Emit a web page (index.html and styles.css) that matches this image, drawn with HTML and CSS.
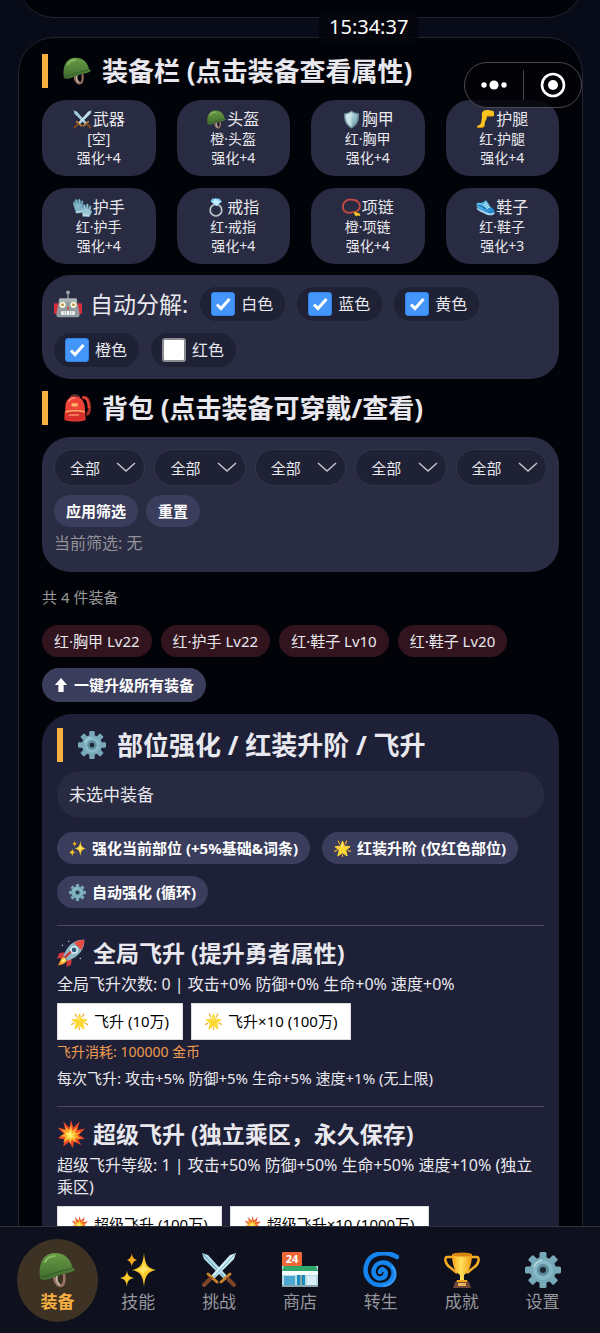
FILE: index.html
```
<!DOCTYPE html>
<html lang="zh-CN">
<head>
<meta charset="utf-8">
<meta name="viewport" content="width=device-width, initial-scale=1">
<title>装备</title>
<link rel="stylesheet" href="styles.css">
</head>
<body>
<svg class="sprite" aria-hidden="true">
  <defs>
    <linearGradient id="g-helmet" x1="0" y1="0" x2="0" y2="1"><stop offset="0" stop-color="#689b45"/><stop offset="1" stop-color="#3f6b2e"/></linearGradient>
    <linearGradient id="g-gold" x1="0" y1="0" x2="1" y2="0"><stop offset="0" stop-color="#f9a51b"/><stop offset=".45" stop-color="#ffe05a"/><stop offset="1" stop-color="#f19b12"/></linearGradient>
    <linearGradient id="g-shield" x1="0" y1="0" x2="1" y2="1"><stop offset="0" stop-color="#d4eef2"/><stop offset="1" stop-color="#6b9cab"/></linearGradient>
    <linearGradient id="g-shoe" x1="0" y1="0" x2="1" y2="1"><stop offset="0" stop-color="#6fd0f5"/><stop offset="1" stop-color="#1476c4"/></linearGradient>
  </defs>
  <symbol id="helmet" viewBox="0 0 36 36">
    <path d="M15 23c0 5 2 10 6 11 4 0 5-5 4-12" fill="none" stroke="#9c7565" stroke-width="2.600"/>
    <path d="M18 23c-1 4 0 8 3 10" fill="none" stroke="#c5b5a8" stroke-width="2"/>
    <path d="M1 26C-1 12 4 1 16 1c10 0 15 6 17 13 .5 2 1 2 3 3-1 3-7 4-12 5-7 2-13 6-19 6-2 0-4-1-4-2z" fill="url(#g-helmet)"/>
    <path d="M1 25c6 0 12-3 18-5 5-2 10-2 15-4" fill="none" stroke="#35582a" stroke-width="1"/>
    <path d="M6 10c2-4 6-6 10-6" fill="none" stroke="#8aba62" stroke-width="2" stroke-linecap="round"/>
  </symbol>
  <symbol id="swords" viewBox="0 0 36 36">
    <path d="M1 1l6 2 20 22-3 3L3 7z" fill="#b5dceb"/><path d="M1 1l24 26" stroke="#5c9ab5" stroke-width="1"/><path d="M20 30l9-8" stroke="#c7812d" stroke-width="3" stroke-linecap="round"/><path d="M27 27l6 6" stroke="#7d4526" stroke-width="4" stroke-linecap="round"/>
    <path d="M35 1l-6 2L9 25l3 3L33 7z" fill="#d2eef6"/><path d="M35 1L11 27" stroke="#6aaac4" stroke-width="1"/><path d="M16 30l-9-8" stroke="#c7812d" stroke-width="3" stroke-linecap="round"/><path d="M9 27l-6 6" stroke="#7d4526" stroke-width="4" stroke-linecap="round"/>
  </symbol>
  <symbol id="shield" viewBox="0 0 36 36">
    <path d="M18 1c4 4 9 5 14 5 1 14-3 23-14 29C7 29 3 20 4 6c5 0 10-1 14-5z" fill="#6d939e"/>
    <path d="M18 4c4 3 7 4 11 5 0 11-3 18-11 23C10 27 7 20 7 9c4-1 7-2 11-5z" fill="url(#g-shield)"/>
    <path d="M18 4v28C10 27 7 20 7 9c4-1 7-2 11-5z" fill="#d6ecf0" opacity=".7"/>
  </symbol>
  <symbol id="leg" viewBox="0 0 36 36">
    <path d="M34 3c-7-3-16-4-20-1-5 4-2 9-3 14-1 6-1 9-3 11-1 2-6 2-6 4 0 1 2 2 7 2 3 0 6-1 7-3 1-4 0-7 3-11 2-3 1-5 2-7 4-1 9 1 13-1z" fill="#ffc31d"/>
    <path d="M2 33h9c4 0 5-2 5-4M20 12c2-2 8 0 13-1" fill="none" stroke="#e59b07" stroke-width="1.500"/>
  </symbol>
  <symbol id="gloves" viewBox="0 0 36 36">
    <path d="M6 29L2 16C0 12 0 7 2 7c2-1 2 3 3 5L4 5c0-3 3-3 4-1l2 7V4c0-3 3-3 4 0l1 8 1-5c1-3 4-2 3 1l-1 9c3-3 5-2 4 0l-6 11z" fill="#83b6c7" stroke="#51879b"/>
    <path d="M18 32l-2-9c-2-3-2-7 0-7s3 3 4 5l-1-7c0-3 3-2 4 0l2 6v-7c1-3 4-2 4 0v8l2-5c1-2 4-1 3 1l-1 8c2-2 4-1 3 1l-5 10-13-1z" fill="#98c6d4" stroke="#51879b"/>
    <path d="M6 27l11-2M19 32l11 1" stroke="#c0dce4" stroke-width="3"/>
  </symbol>
  <symbol id="ring" viewBox="0 0 36 36">
    <circle cx="17" cy="23" r="11" fill="none" stroke="#77838a" stroke-width="4"/>
    <circle cx="17" cy="23" r="11" fill="none" stroke="#c7d1d3" stroke-width="2"/>
    <path d="M10 1h13l5 5-10 9L7 6z" fill="#74c9f3"/><path d="M7 6h21L18 15 12 6l4-5 7 5-5 9" fill="#c1edff"/>
  </symbol>
  <symbol id="beads" viewBox="0 0 36 36">
    <path d="M22 26c-8 4-18 2-20-6C0 9 8 2 18 3c10 0 16 6 16 13 0 5-4 8-10 11" fill="none" stroke="#a83b37" stroke-width="4"/>
    <path d="M22 26c-8 4-18 2-20-6C0 9 8 2 18 3c10 0 16 6 16 13 0 5-4 8-10 11" fill="none" stroke="#d7695d" stroke-width="2" stroke-dasharray="2 2"/>
    <path d="M23 26l10 3 2 5-6-1-2 2-4-4z" fill="#f6c629"/>
  </symbol>
  <symbol id="shoe" viewBox="0 0 36 36">
    <path d="M1 11c3-4 6-1 10-2 5-1 5-5 9-4 2 2 4 8 8 12 4 3 8 5 7 10-1 4-11 5-17 1C11 24 0 20 1 11z" fill="url(#g-shoe)"/>
    <path d="M1 17c5 6 12 6 18 10 6 3 13 3 16-1v3c-1 5-12 5-18 1C9 25 1 25 1 17z" fill="#a9d8ee"/>
    <path d="M14 14l7-5M17 17l7-5M20 20l6-4" stroke="#d8f5ff" stroke-width="2"/><path d="M3 13c6 4 11 1 15 8" fill="none" stroke="#0d5f9c" stroke-width="2"/>
  </symbol>
  <symbol id="robot" viewBox="0 0 36 36">
    <path d="M18 4v9" stroke="#8b989d" stroke-width="2"/><circle cx="18" cy="3" r="2.500" fill="#9aa7ac"/>
    <rect x="0" y="17" width="6" height="14" rx="2" fill="#d92f3c"/><rect x="30" y="17" width="6" height="14" rx="2" fill="#d92f3c"/>
    <path d="M7 11h22l4 21q0 3-3 3H6q-3 0-3-3z" fill="#8f9da2"/><path d="M7 11h22l1 4H6z" fill="#abb7bb"/>
    <circle cx="11" cy="19" r="4" fill="#fff5d6"/><circle cx="25" cy="19" r="4" fill="#fff5d6"/><circle cx="11" cy="19" r="1.600" fill="#9c7b45"/><circle cx="25" cy="19" r="1.600" fill="#9c7b45"/>
    <path d="M18 21l2 4h-4z" fill="#e43b3b"/><rect x="9" y="27" width="18" height="5" rx="2" fill="#f4f4f2"/><path d="M13 27v5m3-5v5m4-5v5m3-5v5" stroke="#8f9da2"/>
  </symbol>
  <symbol id="backpack" viewBox="0 0 36 36">
    <path d="M25 5c7-2 9 5 9 13 0 6-2 8-4 8" fill="none" stroke="#a92a25" stroke-width="4"/><path d="M25 4c6 0 8 6 8 14" fill="none" stroke="#ef4b3c" stroke-width="2.500"/>
    <path d="M10 5c0-5 10-5 11 0" fill="none" stroke="#6d3637" stroke-width="2"/>
    <path d="M3 18C3 8 8 3 15 3s12 5 13 13l1 17c-3 3-23 3-27 0z" fill="#ee4438"/>
    <path d="M2 23c8-3 18-3 26 0v9c-3 3-22 3-26 0z" fill="#d62f2c"/><path d="M3 23c8-2 17-2 25 0" fill="none" stroke="#ffad65" stroke-width="2"/><rect x="7" y="26" width="14" height="2" rx="1" fill="#ff8a65"/><rect x="11" y="12" width="8" height="4" rx="1" fill="#ffb566"/>
    <path d="M7 10c2-4 5-5 9-5" fill="none" stroke="#ff8270" stroke-width="2"/>
  </symbol>
  <symbol id="gear" viewBox="0 0 36 36">
    <g fill="#78a9b8"><rect x="14.500" y="0" width="7" height="36" rx="1.500"/><rect x="14.500" y="0" width="7" height="36" rx="1.500" transform="rotate(45 18 18)"/><rect x="14.500" y="0" width="7" height="36" rx="1.500" transform="rotate(90 18 18)"/><rect x="14.500" y="0" width="7" height="36" rx="1.500" transform="rotate(135 18 18)"/><circle cx="18" cy="18" r="13"/></g>
    <circle cx="18" cy="18" r="10" fill="#86b9c7"/><circle cx="18" cy="18" r="6" fill="#5c8b9b"/><circle cx="18" cy="18" r="3" fill="#1c2632"/><path d="M9 15c1-4 4-6 8-7" fill="none" stroke="#b6dae2" stroke-width="1.500"/>
  </symbol>
  <symbol id="sparkles" viewBox="0 0 36 36">
    <path d="M24 1c1 11 3 15 12 17-9 2-11 6-12 17-1-11-3-15-12-17 9-2 11-6 12-17z" fill="#fdc92b"/><path d="M7 17c0 6 2 8 7 9-5 1-7 3-7 9-1-6-2-8-7-9 5-1 7-3 7-9z" fill="#fdc92b"/><path d="M12 1c0 4 2 6 5 7-3 1-5 3-5 7-1-4-2-6-5-7 3-1 4-3 5-7z" fill="#f5a71e"/>
    <path d="M24 8c0 6 2 9 7 10-6 0-8 2-8 8 0-5-2-8-6-8 4-1 7-3 7-10z" fill="#ffe568"/>
  </symbol>
  <symbol id="star" viewBox="0 0 36 36">
    <path d="M18 2l4 11 12 1-9 8 3 12-10-7-10 7 3-12-9-8 12-1z" fill="#fdd835" stroke="#fdd835" stroke-width="2" stroke-linejoin="round"/>
    <path d="M9 2l3 6M27 2l-3 6M1 24l5-2M35 24l-5-2M18 31v5" stroke="#f4aa25" stroke-width="2.500" stroke-linecap="round"/><path d="M15 14l3-7 1 7" fill="#fff3a2"/>
  </symbol>
  <symbol id="rocket" viewBox="0 0 36 36">
    <path d="M10 17l-7 1-3 7 9-1zM19 26l-1 7-6 3 1-10z" fill="#d33b3a"/>
    <path d="M9 23c-5 0-4 6-8 11 6-1 9-2 12-6z" fill="#ff9e25"/><path d="M10 24c-4 1-4 5-5 7 4-1 6-2 7-4z" fill="#ffec7b"/>
    <path d="M35 1c1 12-7 22-21 27L8 22C13 9 22 0 35 1z" fill="#8eb8c8"/><path d="M35 1c0 5-1 9-4 13L22 5c4-3 8-4 13-4z" fill="#e74b42"/>
    <circle cx="22" cy="14" r="4" fill="#295d78" stroke="#dceaf0" stroke-width="2"/><path d="M11 23l6-6" stroke="#cc383b" stroke-width="3" stroke-linecap="round"/>
    <circle cx="7" cy="8" r="1" fill="#9fc8dc"/><circle cx="30" cy="25" r="1" fill="#9fc8dc"/><circle cx="15" cy="3" r="1" fill="#9fc8dc"/>
  </symbol>
  <symbol id="boom" viewBox="0 0 36 36">
    <path d="M18 0l3 10 8-8-3 11 10-2-8 8 8 5-9 1 4 7-9-4-2 8-4-8-8 6 2-9-9-2 8-5-8-8 10 2L8 2l8 8z" fill="#f04b26"/>
    <path d="M18 6l2 8 6-5-3 8 8-2-6 5 6 4-8-1 2 6-6-4-2 6-2-6-7 4 3-7-7-1 7-4-6-5 8 2-4-6 7 5z" fill="#ffb22b"/><path d="M18 12l1 6 5-2-4 4 4 4-5-2-2 5-1-5-5 2 3-4-5-4 6 1z" fill="#fff06a"/>
  </symbol>
  <symbol id="store" viewBox="0 0 36 36">
    <rect y="14" width="36" height="21" fill="#b9dbe5"/><rect x="0" y="0" width="20" height="14" rx="1" fill="#ef6636"/><text x="10" y="11" text-anchor="middle" class="store-sign">24</text>
    <path d="M2 14h32l2 5H0z" fill="#31a86b"/><path d="M0 19h36v4H0z" fill="#f4fbfc"/>
    <rect x="2" y="24" width="11" height="9" fill="#4ba7d0"/><rect x="15" y="23" width="8" height="12" fill="#168bbb"/><rect x="25" y="24" width="9" height="9" fill="#d8eff5"/><path d="M19 23v12M0 34h36" stroke="#8ba4ad" stroke-width="2"/>
  </symbol>
  <symbol id="cyclone" viewBox="0 0 36 36">
    <path d="M34 5C23-2 8 1 4 11-1 24 8 34 19 33c10-1 15-12 9-19-5-6-15-4-17 3-2 6 3 11 8 9 4-1 5-6 2-8-2-2-4 0-4 2" fill="none" stroke="#1684ed" stroke-width="4.500" stroke-linecap="round"/>
    <path d="M29 14c7 8 3 19-9 20" fill="none" stroke="#3b9bfa" stroke-width="2"/>
  </symbol>
  <symbol id="trophy" viewBox="0 0 36 36">
    <path d="M9 5H3C0 5 1 13 7 16l6 5M27 5h6c3 0 2 8-4 11l-6 5" fill="none" stroke="#f5ad23" stroke-width="2.500"/>
    <path d="M8 2h20c0 11-3 18-8 21v6h-4v-6C11 20 8 13 8 2z" fill="url(#g-gold)"/><ellipse cx="18" cy="2.500" rx="10" ry="2" fill="#d8830b"/><path d="M13 28h10l1 3H12z" fill="#f2a91e"/><path d="M11 30h14l2 6H9z" fill="#71463b"/><rect x="14" y="31" width="8" height="3" fill="#e5b65b"/>
  </symbol>
  <symbol id="up" viewBox="0 0 16 18"><path d="M8 1l7 8h-4v8H5V9H1z" fill="currentColor"/></symbol>
</svg>

<div class="app">
  <main class="content">
    <section class="panel panel-previous"></section>
    <section class="panel">
      <h2 class="title"><svg class="emoji"><use href="#helmet"/></svg> 装备栏 (点击装备查看属性)</h2>
      <div class="slots">
        <button class="slot"><span class="slot-name"><svg class="emoji"><use href="#swords"/></svg>武器</span><span>[空]</span><span>强化+4</span></button>
        <button class="slot"><span class="slot-name"><svg class="emoji"><use href="#helmet"/></svg>头盔</span><span>橙·头盔</span><span>强化+4</span></button>
        <button class="slot"><span class="slot-name"><svg class="emoji"><use href="#shield"/></svg>胸甲</span><span>红·胸甲</span><span>强化+4</span></button>
        <button class="slot"><span class="slot-name"><svg class="emoji"><use href="#leg"/></svg>护腿</span><span>红·护腿</span><span>强化+4</span></button>
        <button class="slot"><span class="slot-name"><svg class="emoji"><use href="#gloves"/></svg>护手</span><span>红·护手</span><span>强化+4</span></button>
        <button class="slot"><span class="slot-name"><svg class="emoji"><use href="#ring"/></svg>戒指</span><span>红·戒指</span><span>强化+4</span></button>
        <button class="slot"><span class="slot-name"><svg class="emoji"><use href="#beads"/></svg>项链</span><span>橙·项链</span><span>强化+4</span></button>
        <button class="slot"><span class="slot-name"><svg class="emoji"><use href="#shoe"/></svg>鞋子</span><span>红·鞋子</span><span>强化+3</span></button>
      </div>

      <div class="card auto">
        <span class="auto-label"><svg class="emoji"><use href="#robot"/></svg> 自动分解:</span>
        <label class="check"><input type="checkbox" checked>白色</label>
        <label class="check"><input type="checkbox" checked>蓝色</label>
        <label class="check"><input type="checkbox" checked>黄色</label>
        <label class="check"><input type="checkbox" checked>橙色</label>
        <label class="check"><input type="checkbox">红色</label>
      </div>

      <h2 class="title"><svg class="emoji"><use href="#backpack"/></svg> 背包 (点击装备可穿戴/查看)</h2>
      <div class="card bag">
        <div class="filters">
          <select aria-label="部位"><option>全部</option></select>
          <select aria-label="品质"><option>全部</option></select>
          <select aria-label="等级"><option>全部</option></select>
          <select aria-label="词条"><option>全部</option></select>
          <select aria-label="排序"><option>全部</option></select>
        </div>
        <div class="bag-actions"><button class="btn">应用筛选</button><button class="btn">重置</button></div>
        <p class="filter-state">当前筛选: 无</p>
      </div>
      <p class="count">共 4 件装备</p>
      <div class="items">
        <button class="item">红·胸甲 Lv22</button>
        <button class="item">红·护手 Lv22</button>
        <button class="item">红·鞋子 Lv10</button>
        <button class="item">红·鞋子 Lv20</button>
      </div>
      <button class="btn upgrade"><svg class="arrow"><use href="#up"/></svg> 一键升级所有装备</button>

      <section class="forge">
        <h2 class="title"><svg class="emoji"><use href="#gear"/></svg> 部位强化 / 红装升阶 / 飞升</h2>
        <p class="selected">未选中装备</p>
        <div class="forge-actions">
          <button class="btn"><svg class="emoji"><use href="#sparkles"/></svg> 强化当前部位 (+5%基础&amp;词条)</button>
          <button class="btn"><svg class="emoji"><use href="#star"/></svg> 红装升阶 (仅红色部位)</button>
          <button class="btn"><svg class="emoji"><use href="#gear"/></svg> 自动强化 (循环)</button>
        </div>
        <hr>
        <h3><svg class="emoji"><use href="#rocket"/></svg> 全局飞升 (提升勇者属性)</h3>
        <p class="stats">全局飞升次数: 0 | 攻击+0% 防御+0% 生命+0% 速度+0%</p>
        <div class="plain-actions">
          <button class="plain"><svg class="emoji"><use href="#star"/></svg> 飞升 (10万)</button>
          <button class="plain"><svg class="emoji"><use href="#star"/></svg> 飞升×10 (100万)</button>
        </div>
        <p class="cost">飞升消耗: 100000 金币</p>
        <p class="rule">每次飞升: 攻击+5% 防御+5% 生命+5% 速度+1% (无上限)</p>
        <hr>
        <h3><svg class="emoji"><use href="#boom"/></svg> 超级飞升 (独立乘区，永久保存)</h3>
        <p class="stats">超级飞升等级: 1 | 攻击+50% 防御+50% 生命+50% 速度+10% (独立乘区)</p>
        <div class="plain-actions">
          <button class="plain"><svg class="emoji"><use href="#boom"/></svg> 超级飞升 (100万)</button>
          <button class="plain"><svg class="emoji"><use href="#boom"/></svg> 超级飞升×10 (1000万)</button>
        </div>
      </section>
    </section>
  </main>

  <nav class="tabs">
    <a class="tab active" href="#equip"><svg class="emoji"><use href="#helmet"/></svg>装备</a>
    <a class="tab" href="#skill"><svg class="emoji"><use href="#sparkles"/></svg>技能</a>
    <a class="tab" href="#fight"><svg class="emoji"><use href="#swords"/></svg>挑战</a>
    <a class="tab" href="#shop"><svg class="emoji"><use href="#store"/></svg>商店</a>
    <a class="tab" href="#rebirth"><svg class="emoji"><use href="#cyclone"/></svg>转生</a>
    <a class="tab" href="#achievement"><svg class="emoji"><use href="#trophy"/></svg>成就</a>
    <a class="tab" href="#settings"><svg class="emoji"><use href="#gear"/></svg>设置</a>
  </nav>
</div>

<time class="clock">15:34:37</time>
<div class="capsule">
  <button aria-label="更多"><svg width="26" height="12" viewBox="0 0 26 12" fill="#fff"><circle cx="3" cy="6" r="2.700"/><circle cx="13" cy="6" r="4.600"/><circle cx="23" cy="6" r="2.700"/></svg></button>
  <button aria-label="关闭"><svg width="26" height="26" viewBox="0 0 26 26"><circle cx="13" cy="13" r="11" fill="none" stroke="#fff" stroke-width="2.600"/><circle cx="13" cy="13" r="5" fill="#fff"/></svg></button>
</div>
</body>
</html>
```
FILE: styles.css
```
* { box-sizing: border-box; }
body {
  margin: 0;
  background: #080b18;
  color: #e8e8ee;
  font: 16px/22px "Noto Sans", "Noto Sans CJK SC", sans-serif;
}
h2, h3, p { margin: 0; }
button, select, input { font: inherit; color: inherit; margin: 0; }
button { border: 0; cursor: pointer; white-space: nowrap; }
.sprite { position: absolute; width: 0; height: 0; }
.emoji { width: 28px; height: 28px; flex: none; vertical-align: middle; }
.store-sign { font: bold 11px "Noto Sans", sans-serif; fill: #fff; }

.app { display: flex; flex-direction: column; height: 100vh; }
.content { flex: 1; min-height: 0; overflow: hidden; padding: 0 17px 0 18px; }
.panel {
  border: 1px solid #23252e;
  border-radius: 36px;
  background: #020308;
  padding: 16px 23px;
}
.panel-previous { height: 80px; margin: -62px 0 19px; }

.title {
  display: flex;
  align-items: center;
  gap: 11px;
  border-left: 6px solid #f5b041;
  padding-left: 15px;
  font-size: 26px;
  line-height: 34px;
  white-space: nowrap;
}
.slots {
  display: grid;
  grid-template-columns: repeat(4, 1fr);
  gap: 12px 21px;
  margin: 12px 0 11px;
}
.slot {
  display: flex;
  flex-direction: column;
  align-items: center;
  padding: 9px 0;
  border-radius: 24px;
  background: #282b41;
  font-size: 14px;
  line-height: 19px;
}
.slot-name { display: flex; align-items: center; gap: 1px; font-size: 16px; line-height: 20px; }
.slot .emoji { width: 19px; height: 19px; }

.card { border-radius: 28px; background: #292c42; padding: 12px; }
.auto { display: flex; flex-wrap: wrap; gap: 12px; margin-bottom: 12px; }
.auto-label { display: flex; align-items: center; gap: 8px; font-size: 23px; line-height: 34px; }
.check {
  display: flex;
  align-items: center;
  gap: 6px;
  padding: 5px 12px 5px 11px;
  border-radius: 17px;
  background: #1f2135;
  line-height: 24px;
}
.check input {
  appearance: none;
  width: 24px;
  height: 24px;
  border: 2px solid #8c8c90;
  border-radius: 3px;
  background: #fff;
}
.check input:checked {
  border: 1px solid #3381e8;
  background: #4496fb url("data:image/svg+xml,%3Csvg xmlns='http://www.w3.org/2000/svg' viewBox='0 0 22 22'%3E%3Cpath d='M5 11.500l4 4L17.500 6' fill='none' stroke='white' stroke-width='3'/%3E%3C/svg%3E") center / 22px 22px no-repeat;
}

.bag { margin-top: 12px; padding-bottom: 18px; }
.filters { display: grid; grid-template-columns: repeat(5, 1fr); gap: 9px; }
.filters select {
  appearance: none;
  min-width: 0;
  height: 37px;
  padding: 0 15px;
  border: 1px solid #34364e;
  border-radius: 19px;
  font-size: 15px;
  background: #1f2135 url("data:image/svg+xml,%3Csvg xmlns='http://www.w3.org/2000/svg' viewBox='0 0 20 11'%3E%3Cpath d='M1 1l9 8 9-8' fill='none' stroke='%23c4c5cf' stroke-width='1.500'/%3E%3C/svg%3E") right 8px center / 20px 11px no-repeat;
}
.bag-actions { display: flex; gap: 8px; margin: 9px 0 5px; }
.btn {
  display: inline-flex;
  align-items: center;
  gap: 6px;
  padding: 5px 12px;
  border-radius: 17px;
  background: #3a3d5c;
  color: #fff;
  font-size: 15px;
  font-weight: bold;
}
.btn .emoji, .plain .emoji { width: 17px; height: 17px; }
.filter-state { color: #929298; }
.count { margin: 14px 0 17px; color: #999; font-size: 15px; }
.items { display: flex; flex-wrap: wrap; gap: 9px; margin-bottom: 11px; }
.item { padding: 5px 12px; border-radius: 16px; background: #32141e; font-size: 15px; }
.upgrade { padding: 6px 12px; margin-bottom: 12px; }
.arrow { width: 14px; height: 16px; }

.forge { padding: 14px 15px; border-radius: 30px; background: #1e2037; }
.selected {
  margin: 9px 0 14px;
  padding: 12px;
  border-radius: 24px;
  background: #272a40;
  font-size: 17px;
  line-height: 23px;
}
.forge-actions { display: flex; flex-wrap: wrap; gap: 12px; }
hr { height: 1px; margin: 17px 0 10px; border: 0; background: #4a4c5c; }
h3 { display: flex; align-items: center; gap: 8px; font-size: 23px; line-height: 34px; white-space: nowrap; }
.stats { margin: 3px 0 8px; }
.plain-actions { display: flex; gap: 8px; }
.plain {
  display: inline-flex;
  align-items: center;
  gap: 6px;
  padding: 7px 13px;
  border: 1px solid #ddd;
  background: #fff;
  color: #000;
  font-size: 15px;
  line-height: 21px;
}
.cost { margin: 1px 0 4px; color: #ef9a50; font-size: 14px; }
.rule { font-size: 15px; }

.tabs {
  display: grid;
  grid-template-columns: repeat(7, 1fr);
  padding: 12px 17px 11px;
  border-top: 1px solid #30323c;
  background: #0e101d;
}
.tab {
  display: flex;
  flex-direction: column;
  align-items: center;
  gap: 3px;
  padding: 13px 0 9px;
  border-radius: 50%;
  color: #96979c;
  font-size: 17px;
  text-decoration: none;
}
.tab .emoji { width: 36px; height: 36px; }
.tab.active { background: #3e3225; color: #f5b041; font-weight: bold; }

.clock {
  position: absolute;
  top: 13px;
  left: 319px;
  padding: 1px 10px 3px;
  background: rgba(5, 6, 12, .85);
  color: #fff;
  font: 20px/26px "Noto Sans", sans-serif;
}
.capsule {
  position: absolute;
  top: 62px;
  right: 18px;
  display: grid;
  grid-template-columns: 1fr 1fr;
  align-items: center;
  width: 118px;
  height: 46px;
  border: 1px solid #4a4b50;
  border-radius: 23px;
  background: rgba(2, 3, 8, .8);
}
.capsule button { display: grid; place-items: center; height: 30px; padding: 0; background: none; }
.capsule button + button { border-left: 1px solid #44454a; }
```
